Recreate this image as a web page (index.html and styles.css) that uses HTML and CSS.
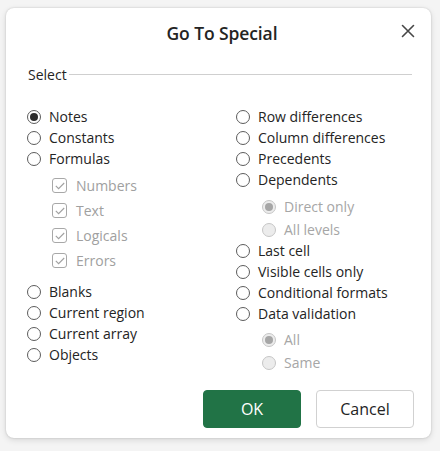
FILE: index.html
```html
<!DOCTYPE html>
<html>
<head>
<meta charset="utf-8">
<link rel="stylesheet" href="styles.css">
</head>
<body>
<div class="dialog">
  <div class="header">
    <div class="title">Go To Special</div>
    <button class="close" aria-label="Close">
      <svg width="14" height="14" viewBox="0 0 14 14"><path d="M1.5 1.5L12.5 12.5M12.5 1.5L1.5 12.5" stroke="#474747" stroke-width="1.6" fill="none" stroke-linecap="round"/></svg>
    </button>
  </div>
  <div class="legend"><span>Select</span><div class="rule"></div></div>
  <div class="columns">
    <div class="col left">
      <div class="opt"><span class="radio checked"></span>Notes</div>
      <div class="opt"><span class="radio"></span>Constants</div>
      <div class="opt"><span class="radio"></span>Formulas</div>
      <div class="checks">
        <div class="chk"><span class="box"><svg width="10" height="8" viewBox="0 0 10 8"><path d="M0.8 3.8L3.6 6.6L9.2 1" stroke="#a0a0a0" stroke-width="1.1" fill="none"/></svg></span>Numbers</div>
        <div class="chk"><span class="box"><svg width="10" height="8" viewBox="0 0 10 8"><path d="M0.8 3.8L3.6 6.6L9.2 1" stroke="#a0a0a0" stroke-width="1.1" fill="none"/></svg></span>Text</div>
        <div class="chk"><span class="box"><svg width="10" height="8" viewBox="0 0 10 8"><path d="M0.8 3.8L3.6 6.6L9.2 1" stroke="#a0a0a0" stroke-width="1.1" fill="none"/></svg></span>Logicals</div>
        <div class="chk"><span class="box"><svg width="10" height="8" viewBox="0 0 10 8"><path d="M0.8 3.8L3.6 6.6L9.2 1" stroke="#a0a0a0" stroke-width="1.1" fill="none"/></svg></span>Errors</div>
      </div>
      <div class="group2">
        <div class="opt"><span class="radio"></span>Blanks</div>
        <div class="opt"><span class="radio"></span>Current region</div>
        <div class="opt"><span class="radio"></span>Current array</div>
        <div class="opt"><span class="radio"></span>Objects</div>
      </div>
    </div>
    <div class="col right">
      <div class="opt"><span class="radio"></span>Row differences</div>
      <div class="opt"><span class="radio"></span>Column differences</div>
      <div class="opt"><span class="radio"></span>Precedents</div>
      <div class="opt"><span class="radio"></span>Dependents</div>
      <div class="sub">
        <div class="opt dis"><span class="radio checked"></span>Direct only</div>
        <div class="opt dis"><span class="radio"></span>All levels</div>
      </div>
      <div class="opt"><span class="radio"></span>Last cell</div>
      <div class="opt"><span class="radio"></span>Visible cells only</div>
      <div class="opt"><span class="radio"></span>Conditional formats</div>
      <div class="opt"><span class="radio"></span>Data validation</div>
      <div class="sub">
        <div class="opt dis"><span class="radio checked"></span>All</div>
        <div class="opt dis"><span class="radio"></span>Same</div>
      </div>
    </div>
  </div>
  <div class="footer">
    <button class="btn primary">OK</button>
    <button class="btn">Cancel</button>
  </div>
</div>
</body>
</html>
```
FILE: styles.css
```css
html, body {
  margin: 0;
  padding: 0;
  background: #f4f4f4;
}
body {
  font-family: "Open Sans", "Noto Sans", "Liberation Sans", sans-serif;
  color: #242424;
  width: 440px;
  height: 451px;
  overflow: hidden;
}
.dialog {
  box-sizing: border-box;
  margin: 8px 0 0 6px;
  width: 425px;
  height: 430px;
  background: #fff;
  border-radius: 8px;
  box-shadow: 0 0 2px rgba(0,0,0,0.18), 0 2px 6px rgba(0,0,0,0.12);
  display: flex;
  flex-direction: column;
}
.header {
  position: relative;
  height: 48px;
  display: flex;
  align-items: center;
  justify-content: center;
}
.title {
  font-size: 17.5px;
  font-weight: 600;
  padding-left: 7px;
  padding-top: 1px;
  letter-spacing: -0.1px;
}
.close {
  position: absolute;
  right: 16px;
  top: 16px;
  border: 0;
  background: none;
  padding: 0;
  width: 14px;
  height: 14px;
  display: flex;
}
.legend {
  display: flex;
  align-items: center;
  padding: 0 19px 0 22px;
  height: 24px;
  margin-top: 6px;
  font-size: 14px;
}
.legend span { margin-right: 2px; }
.rule {
  flex: 1;
  height: 1px;
  background: #cfcfcf;
  margin-top: 1px;
}
.columns {
  display: grid;
  grid-template-columns: 209px 1fr;
  padding: 20px 0 0 21px;
  font-size: 14px;
}
.opt {
  height: 21px;
  display: flex;
  align-items: center;
  white-space: nowrap;
}
.radio {
  box-sizing: border-box;
  width: 14px;
  height: 14px;
  border: 1px solid #5c5c5c;
  border-radius: 50%;
  margin-right: 8px;
  flex: none;
  display: flex;
  align-items: center;
  justify-content: center;
}
.radio.checked::after {
  content: "";
  width: 8px;
  height: 8px;
  border-radius: 50%;
  background: #2b2b2b;
}
.checks {
  margin-top: 4px;
  padding-left: 25px;
}
.chk {
  height: 25px;
  display: flex;
  align-items: center;
  color: #a0a0a0;
}
.box {
  box-sizing: border-box;
  width: 15px;
  height: 15px;
  border: 1px solid #a8a8a8;
  border-radius: 3px;
  margin-right: 9px;
  display: flex;
  align-items: center;
  justify-content: center;
}
.group2 { margin-top: 8px; }
.sub {
  padding-left: 26px;
  margin-top: 5px;
}
.sub + .opt { margin-top: -1px; }
.dis {
  height: 23px;
  color: #a6a6a6;
}
.dis .radio {
  border-color: #c6c6c6;
  background: #ececec;
}
.dis .radio.checked::after {
  background: #a6a6a6;
}
.right .sub:last-child { margin-top: 4px; }
.footer {
  margin-top: auto;
  display: flex;
  justify-content: flex-end;
  gap: 15px;
  padding: 0 17px 10px 0;
}
.btn {
  box-sizing: border-box;
  width: 98px;
  height: 38px;
  border: 1px solid #d1d1d1;
  background: #fff;
  border-radius: 4px;
  font-family: inherit;
  font-size: 16px;
  color: #242424;
}
.primary {
  background: #217346;
  border-color: #217346;
  color: #fff;
}
```
